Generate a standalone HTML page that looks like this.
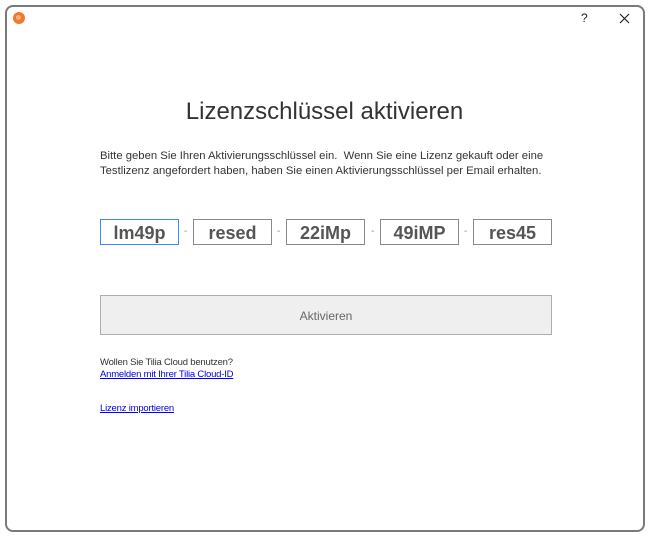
<!DOCTYPE html>
<html><head><meta charset="utf-8"><style>
body{margin:0;width:649px;height:537px;background:#fff;position:relative;overflow:hidden;font-family:"Liberation Sans",sans-serif}
.win{position:absolute;left:5px;top:5px;width:636px;height:523px;border:2px solid #7a7a7a;border-radius:8px;background:#fff}
.a{position:absolute}
.box{position:absolute;top:219px;width:77px;height:24px;border:1px solid #8a8a8a;font-weight:bold;font-size:18px;color:#555;text-align:center;line-height:27px}
.dash{position:absolute;top:226px;font-size:10px;color:#888}
a{color:#0000ee;font-size:9.5px;text-decoration:underline;letter-spacing:-0.2px}
</style></head><body>
<div class="win"></div>
<div class="a" style="left:13px;top:12px;width:12px;height:12px;border-radius:50%;background:#f07a2a"></div>
<div class="a" style="left:16px;top:15px;width:5px;height:5px;border-radius:50%;background:#f8b080"></div>
<div class="a" style="left:581px;top:11px;font-size:12px;color:#222">?</div>
<svg class="a" style="left:619px;top:13px" width="11" height="11"><path d="M1 1L10 10M10 1L1 10" stroke="#222" stroke-width="1.2"/></svg>
<div class="a" style="left:0;width:649px;top:98px;text-align:center;font-size:24px;color:#333">Lizenzschlüssel aktivieren</div>
<div class="a" style="left:100px;top:149px;font-size:11.3px;color:#333;line-height:15px">Bitte geben Sie Ihren Aktivierungsschlüssel ein.&nbsp; Wenn Sie eine Lizenz gekauft oder eine<br>Testlizenz angefordert haben, haben Sie einen Aktivierungsschlüssel per Email erhalten.</div>
<div class="box" style="left:100px;border-color:#3c8cf0">lm49p</div><span class="dash" style="left:184px">-</span>
<div class="box" style="left:193px">resed</div><span class="dash" style="left:277px">-</span>
<div class="box" style="left:286px">22iMp</div><span class="dash" style="left:371px">-</span>
<div class="box" style="left:380px">49iMP</div><span class="dash" style="left:464px">-</span>
<div class="box" style="left:473px">res45</div>
<div class="a" style="left:100px;top:295px;width:450px;height:38px;border:1px solid #adadad;background:#efefef;text-align:center;line-height:40px;font-size:12px;color:#666">Aktivieren</div>
<div class="a" style="left:100px;top:357px;font-size:9.5px;color:#333;line-height:12px;letter-spacing:-0.2px">Wollen Sie Tilia Cloud benutzen?<br><a>Anmelden mit Ihrer Tilia Cloud-ID</a></div>
<div class="a" style="left:100px;top:401px;line-height:12px"><a>Lizenz importieren</a></div>
</body></html>
